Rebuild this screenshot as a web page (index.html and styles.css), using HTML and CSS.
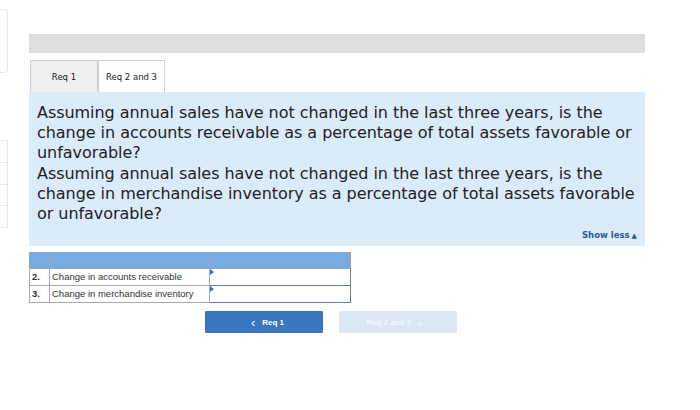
FILE: index.html
```html
<!DOCTYPE html>
<html>
<head>
<meta charset="utf-8">
<link rel="stylesheet" href="styles.css">
</head>
<body>
<div class="edge edge-top"></div>
<div class="edge edge-list">
  <div class="edge-row"></div><div class="edge-row"></div><div class="edge-row"></div><div class="edge-row"></div>
</div>
<main class="page">
  <div class="topbar"></div>
  <div class="tabs">
    <div class="tab">Req 1</div>
    <div class="tab active">Req 2 and 3</div>
  </div>
  <section class="question">
    <p class="qtext">Assuming annual sales have not changed in the last three years, is the change in accounts receivable as a percentage of total assets favorable or unfavorable?<br>Assuming annual sales have not changed in the last three years, is the change in merchandise inventory as a percentage of total assets favorable or unfavorable?</p>
    <div class="showless">Show less<span class="tri">▲</span></div>
  </section>
  <table class="answers">
    <tr class="head"><td class="num"></td><td class="label"></td><td class="input"></td></tr>
    <tr class="row"><td class="num">2.</td><td class="label">Change in accounts receivable</td><td class="input"><span class="mark"></span></td></tr>
    <tr class="row"><td class="num">3.</td><td class="label">Change in merchandise inventory</td><td class="input"><span class="mark"></span></td></tr>
  </table>
  <div class="nav">
    <div class="btn prev"><span class="chev">&lsaquo;</span> Req 1</div>
    <div class="btn next">Req 2 and 3 <span class="chev">&rsaquo;</span></div>
  </div>
</main>
</body>
</html>
```
FILE: styles.css
```css
html, body { margin: 0; padding: 0; background: #fff; }
body { width: 700px; height: 410px; position: relative; overflow: hidden; font-family: "DejaVu Sans", Verdana, sans-serif; }

.edge { position: absolute; left: -8px; width: 14px; border: 1px solid #e6e6e6; border-radius: 4px; }
.edge-top { top: 9px; height: 62px; }
.edge-list { top: 140px; height: 86px; border-radius: 0; display: flex; flex-direction: column; }
.edge-row { flex: 1; border-bottom: 1px solid #e8e8e8; }
.edge-row:last-child { border-bottom: 0; }

.page { margin-left: 29px; width: 616px; padding-top: 34px; }
.topbar { height: 19px; background: #dddddd; }

.tabs { display: flex; margin-top: 7px; padding-left: 1px; }
.tab { width: 68px; height: 32px; box-sizing: border-box; border: 1px solid #cfcfcf; border-bottom: 0; background: #efefef; font-size: 8.5px; color: #222; display: flex; align-items: center; justify-content: center; }
.tab.active { background: #fff; width: 67px; }

.question { background: #dcebf9; padding: 11px 8px 4px 8px; }
.qtext { margin: 0; font-size: 16px; line-height: 20.2px; color: #222; letter-spacing: -0.05px; }
.showless { text-align: right; font-size: 8.5px; font-weight: bold; color: #2c5a95; margin-top: 5px; padding-right: 0; line-height: 12px; }
.tri { font-size: 7px; margin-left: 2px; }

.answers { border-collapse: collapse; margin-top: 6px; font-family: "Liberation Sans", Arial, sans-serif; font-size: 9.5px; color: #333; }
.answers td { border: 1px solid #a8a8a8; padding: 0 2px; box-sizing: border-box; line-height: 12px; }
.answers .head td { background: #76abe2; border-color: #8fa9c6; }
.answers .head { height: 16px; }
.answers .row { height: 17px; }
.answers .num { width: 20px; font-weight: bold; }
.answers .label { width: 160px; }
.answers .input { width: 141px; border: 1.5px solid #6d7a8c; position: relative; padding: 0; }
.answers .head .input { border: 1px solid #8fa9c6; }
.mark { position: absolute; left: 0; top: 0; width: 0; height: 0; border-top: 3px solid transparent; border-bottom: 3px solid transparent; border-left: 4px solid #3c73b8; }

.nav { display: flex; gap: 16px; margin-top: 8px; margin-left: 176px; }
.btn { width: 118px; height: 22px; display: flex; align-items: center; justify-content: center; font-family: "Liberation Sans", Arial, sans-serif; font-size: 8px; font-weight: bold; border-radius: 1px; }
.btn.prev { background: #3876c1; color: #fff; }
.btn.next { background: #dce7f4; color: #f4f8fc; }
.chev { font-size: 13px; margin: 0 7px; line-height: 1; font-weight: normal; }
```
